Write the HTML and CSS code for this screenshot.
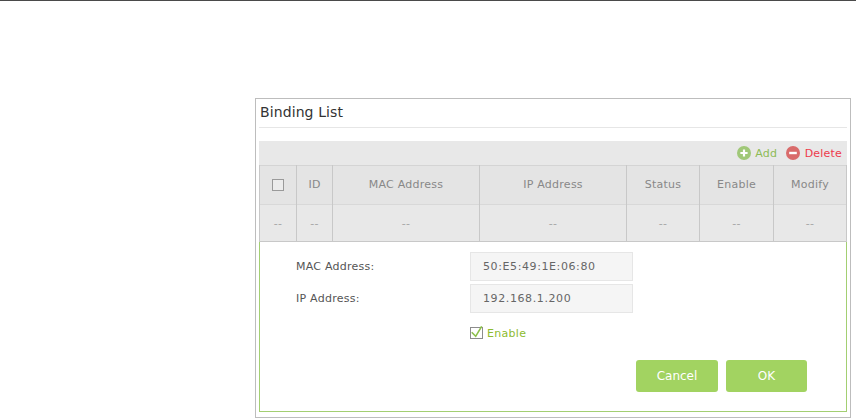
FILE: index.html
```html
<!DOCTYPE html>
<html lang="en">

<head>
    <meta charset="UTF-8">
    <title>Binding List</title>
    <link rel="stylesheet" href="styles.css">
</head>

<body>
    <div class="top-line"></div>

    <div class="panel">
        <h2 class="panel-title">Binding List</h2>

        <div class="toolbar">
            <span class="tool tool-add">
                <svg class="tool-icon" viewBox="0 0 14 14"><circle cx="7" cy="7" r="7" fill="#a0c878"/><path d="M7 3.4v7.2M3.4 7h7.2" stroke="#fff" stroke-width="2.2"/></svg>
                Add
            </span>
            <span class="tool tool-delete">
                <svg class="tool-icon" viewBox="0 0 14 14"><circle cx="7" cy="7" r="7" fill="#d96b6b"/><path d="M3.2 7h7.6" stroke="#fff" stroke-width="2.4"/></svg>
                Delete
            </span>
        </div>

        <table class="list">
            <colgroup>
                <col class="col-check">
                <col class="col-id">
                <col class="col-mac">
                <col class="col-ip">
                <col class="col-status">
                <col class="col-enable">
                <col class="col-modify">
            </colgroup>
            <tr class="head-row">
                <th><span class="head-check"></span></th>
                <th>ID</th>
                <th>MAC Address</th>
                <th>IP Address</th>
                <th>Status</th>
                <th>Enable</th>
                <th>Modify</th>
            </tr>
            <tr class="body-row">
                <td>--</td>
                <td>--</td>
                <td>--</td>
                <td>--</td>
                <td>--</td>
                <td>--</td>
                <td>--</td>
            </tr>
        </table>

        <div class="edit-box">
            <div class="field">
                <label class="field-label">MAC Address:</label>
                <div class="field-value">50:E5:49:1E:06:80</div>
            </div>
            <div class="field">
                <label class="field-label">IP Address:</label>
                <div class="field-value">192.168.1.200</div>
            </div>
            <div class="enable-row">
                <svg class="enable-check" viewBox="0 0 14 14"><rect x="0.5" y="1.5" width="12" height="11" fill="#fff" stroke="#8c8c8c"/><path d="M1.7 6.3l4 4 6-10" fill="none" stroke="#8cc04a" stroke-width="1.6"/></svg>
                <span class="enable-text">Enable</span>
            </div>
            <div class="button-row">
                <button class="action-button action-cancel">Cancel</button>
                <button class="action-button">OK</button>
            </div>
        </div>
    </div>
</body>

</html>
```

FILE: styles.css
```css
body {
    font-family: 'DejaVu Sans', Verdana, sans-serif;
    margin: 0;
    background-color: #fff;
    color: #555;
    height: 418px;
    overflow: hidden;
}

.top-line {
    height: 1px;
    background-color: #4a4a4a;
}

.panel {
    box-sizing: border-box;
    width: 596px;
    height: 320px;
    margin: 97px 0 0 255px;
    padding: 0 3px 0 3px;
    border: 1px solid #bdbdbd;
}

.panel-title {
    margin: 0;
    height: 28px;
    line-height: 27px;
    padding-left: 1px;
    font-size: 14px;
    font-weight: normal;
    letter-spacing: 0.1px;
    color: #333;
    border-bottom: 1px solid #e6e6e6;
}

.toolbar {
    display: flex;
    justify-content: flex-end;
    align-items: center;
    gap: 9px;
    height: 24px;
    margin-top: 13px;
    padding-right: 5px;
    background-color: #e8e8e8;
    font-size: 11px;
    letter-spacing: 0.2px;
}

.tool {
    display: flex;
    align-items: center;
    gap: 4.5px;
}

.tool-icon {
    width: 14px;
    height: 14px;
}

.tool-add {
    color: #8dbb55;
}

.tool-delete {
    color: #ee3b4b;
}

.list {
    table-layout: fixed;
    border-collapse: collapse;
    width: 587px;
    font-size: 11px;
    letter-spacing: 0.25px;
    color: #888;
    background-color: #e8e8e8;
}

.col-check { width: 37px; }
.col-id { width: 36px; }
.col-mac { width: 147px; }
.col-ip { width: 147px; }
.col-status { width: 73px; }
.col-enable { width: 74px; }
.col-modify { width: 73px; }

.list th,
.list td {
    padding: 0;
    text-align: center;
    font-weight: normal;
    border-left: 1px solid #c8c8c8;
    border-right: 1px solid #c8c8c8;
}

.head-row {
    height: 39px;
    background-color: #e4e4e4;
    border-top: 1px solid #d4d4d4;
    border-bottom: 1px solid #d8d8d8;
}

.head-row th {
    padding-bottom: 1px;
}

.body-row {
    height: 37px;
    color: #a6a6a6;
    border-bottom: 1px solid #c8c8c8;
}

.head-check {
    display: inline-block;
    box-sizing: border-box;
    width: 12px;
    height: 12px;
    vertical-align: middle;
    background-color: #ececec;
    border: 1px solid #9a9a9a;
}

.edit-box {
    box-sizing: border-box;
    width: 588px;
    height: 170px;
    padding-top: 10px;
    border: 1px solid #a3cf72;
    border-top: none;
}

.field {
    display: flex;
    align-items: center;
    height: 29px;
    margin-bottom: 3px;
    font-size: 11px;
}

.field-label {
    width: 174px;
    margin-left: 36px;
    letter-spacing: 0.25px;
    color: #555;
}

.field-value {
    box-sizing: border-box;
    width: 163px;
    height: 29px;
    line-height: 27px;
    padding-left: 12px;
    background-color: #f5f5f5;
    border: 1px solid #e6e6e6;
    font-size: 11px;
    letter-spacing: 0.6px;
    color: #666;
}

.enable-row {
    display: flex;
    align-items: center;
    gap: 3px;
    margin: 12px 0 0 210px;
    height: 16px;
    font-size: 11px;
}

.enable-check {
    width: 14px;
    height: 14px;
}

.enable-text {
    letter-spacing: 0.3px;
    color: #8dbb30;
}

.button-row {
    display: flex;
    justify-content: flex-end;
    gap: 8px;
    margin-top: 19px;
    padding-right: 39px;
}

.action-button {
    font-family: 'DejaVu Sans', Verdana, sans-serif;
    width: 81px;
    height: 32px;
    padding: 0;
    border: none;
    border-radius: 3px;
    background-color: #a2d361;
    color: #fff;
    font-size: 12px;
}

.action-cancel {
    width: 82px;
}
```
